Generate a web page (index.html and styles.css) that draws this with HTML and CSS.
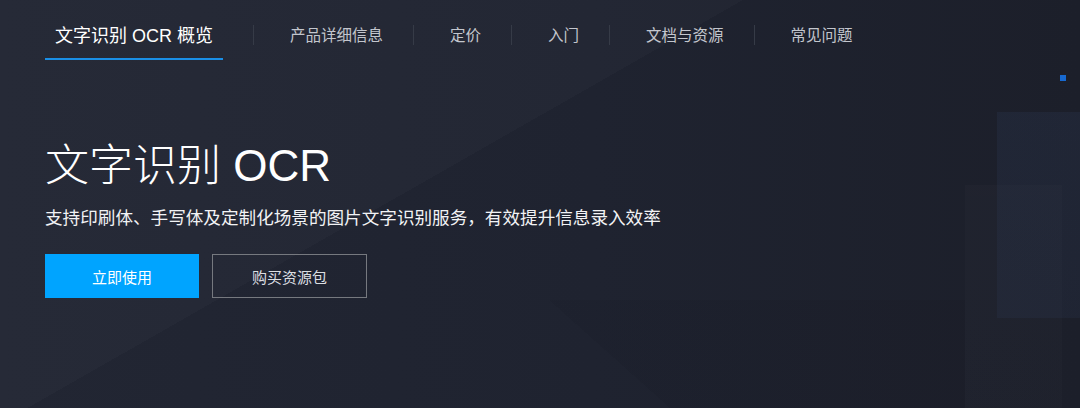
FILE: index.html
```html
<!DOCTYPE html>
<html lang="zh-CN">
<head>
    <meta charset="UTF-8">
    <meta name="viewport" content="width=device-width, initial-scale=1.0">
    <title>文字识别 OCR</title>
    <link rel="stylesheet" href="styles.css">
</head>
<body>
    <div class="banner">
        <nav class="tabs">
            <a class="tab active" href="#">文字识别 OCR 概览</a>
            <span class="sep"></span>
            <a class="tab" href="#">产品详细信息</a>
            <span class="sep"></span>
            <a class="tab" href="#">定价</a>
            <span class="sep"></span>
            <a class="tab" href="#">入门</a>
            <span class="sep"></span>
            <a class="tab" href="#">文档与资源</a>
            <span class="sep"></span>
            <a class="tab" href="#">常见问题</a>
        </nav>

        <section class="hero">
            <h1 class="title">文字识别 OCR</h1>
            <p class="desc">支持印刷体、手写体及定制化场景的图片文字识别服务，有效提升信息录入效率</p>
            <div class="actions">
                <a class="btn btn-primary" href="#">立即使用</a>
                <a class="btn btn-ghost" href="#">购买资源包</a>
            </div>
        </section>
    </div>
</body>
</html>
```

FILE: styles.css
```css
* {
    margin: 0;
    padding: 0;
    box-sizing: border-box;
}
body {
    width: 1080px;
    height: 408px;
    overflow: hidden;
    background-color: #1f2330;
    font-family: "Liberation Sans", "Noto Sans CJK SC", sans-serif;
    color: #fff;
}
a {
    text-decoration: none;
    color: inherit;
}
.banner {
    height: 408px;
    background:
        /* little blue marker top right */
        linear-gradient(#1769d1, #1769d1) 1060px 75px / 6px 6px no-repeat,
        /* faint blocks on the right */
        linear-gradient(rgba(50, 66, 100, 0.2), rgba(50, 66, 100, 0.16)) 997px 112px / 83px 206px no-repeat,
        linear-gradient(rgba(255, 255, 255, 0.014), rgba(255, 255, 255, 0.01)) 965px 185px / 97px 223px no-repeat,
        linear-gradient(41.8deg, transparent 80.6px, rgba(0, 0, 0, 0.05) 80.6px) 549px 300px / 416px 108px no-repeat,
        /* big diagonal plane */
        linear-gradient(150.3deg, rgba(255, 255, 255, 0.02) 368px, rgba(255, 255, 255, 0) 368px),
        linear-gradient(90deg, #222633 0%, #1f2330 55%, #1c1f2a 100%);
}

/* tabs */
.tabs {
    display: flex;
    height: 60px;
    padding-left: 45px;
}
.tab {
    display: flex;
    align-items: center;
    height: 60px;
    padding: 10px 30px 0 36px;
    border-bottom: 2px solid transparent;
    font-size: 15.5px;
    color: #c3c6cd;
    white-space: nowrap;
}
.tab.active {
    padding: 10px 10px 0;
    margin-right: 30px;
    font-size: 18px;
    color: #fff;
    border-bottom-color: #1a8fe6;
}
.sep {
    align-self: center;
    width: 1px;
    height: 20px;
    margin-top: 10px;
    background-color: #363b47;
}

/* hero */
.hero {
    padding: 84px 0 0 45px;
}
.title {
    font-size: 44px;
    font-weight: 300;
    line-height: 44px;
}
.desc {
    margin-top: 21px;
    font-size: 17.6px;
    line-height: 18px;
    color: #f2f3f5;
}
.actions {
    display: flex;
    gap: 13px;
    margin-top: 27px;
}
.btn {
    display: flex;
    justify-content: center;
    align-items: center;
    width: 154px;
    height: 44px;
    font-size: 15px;
}
.btn-primary {
    background-color: #00a4ff;
    color: #fff;
}
.btn-ghost {
    width: 155px;
    border: 1px solid #76797f;
    color: #dcdee2;
}
```
